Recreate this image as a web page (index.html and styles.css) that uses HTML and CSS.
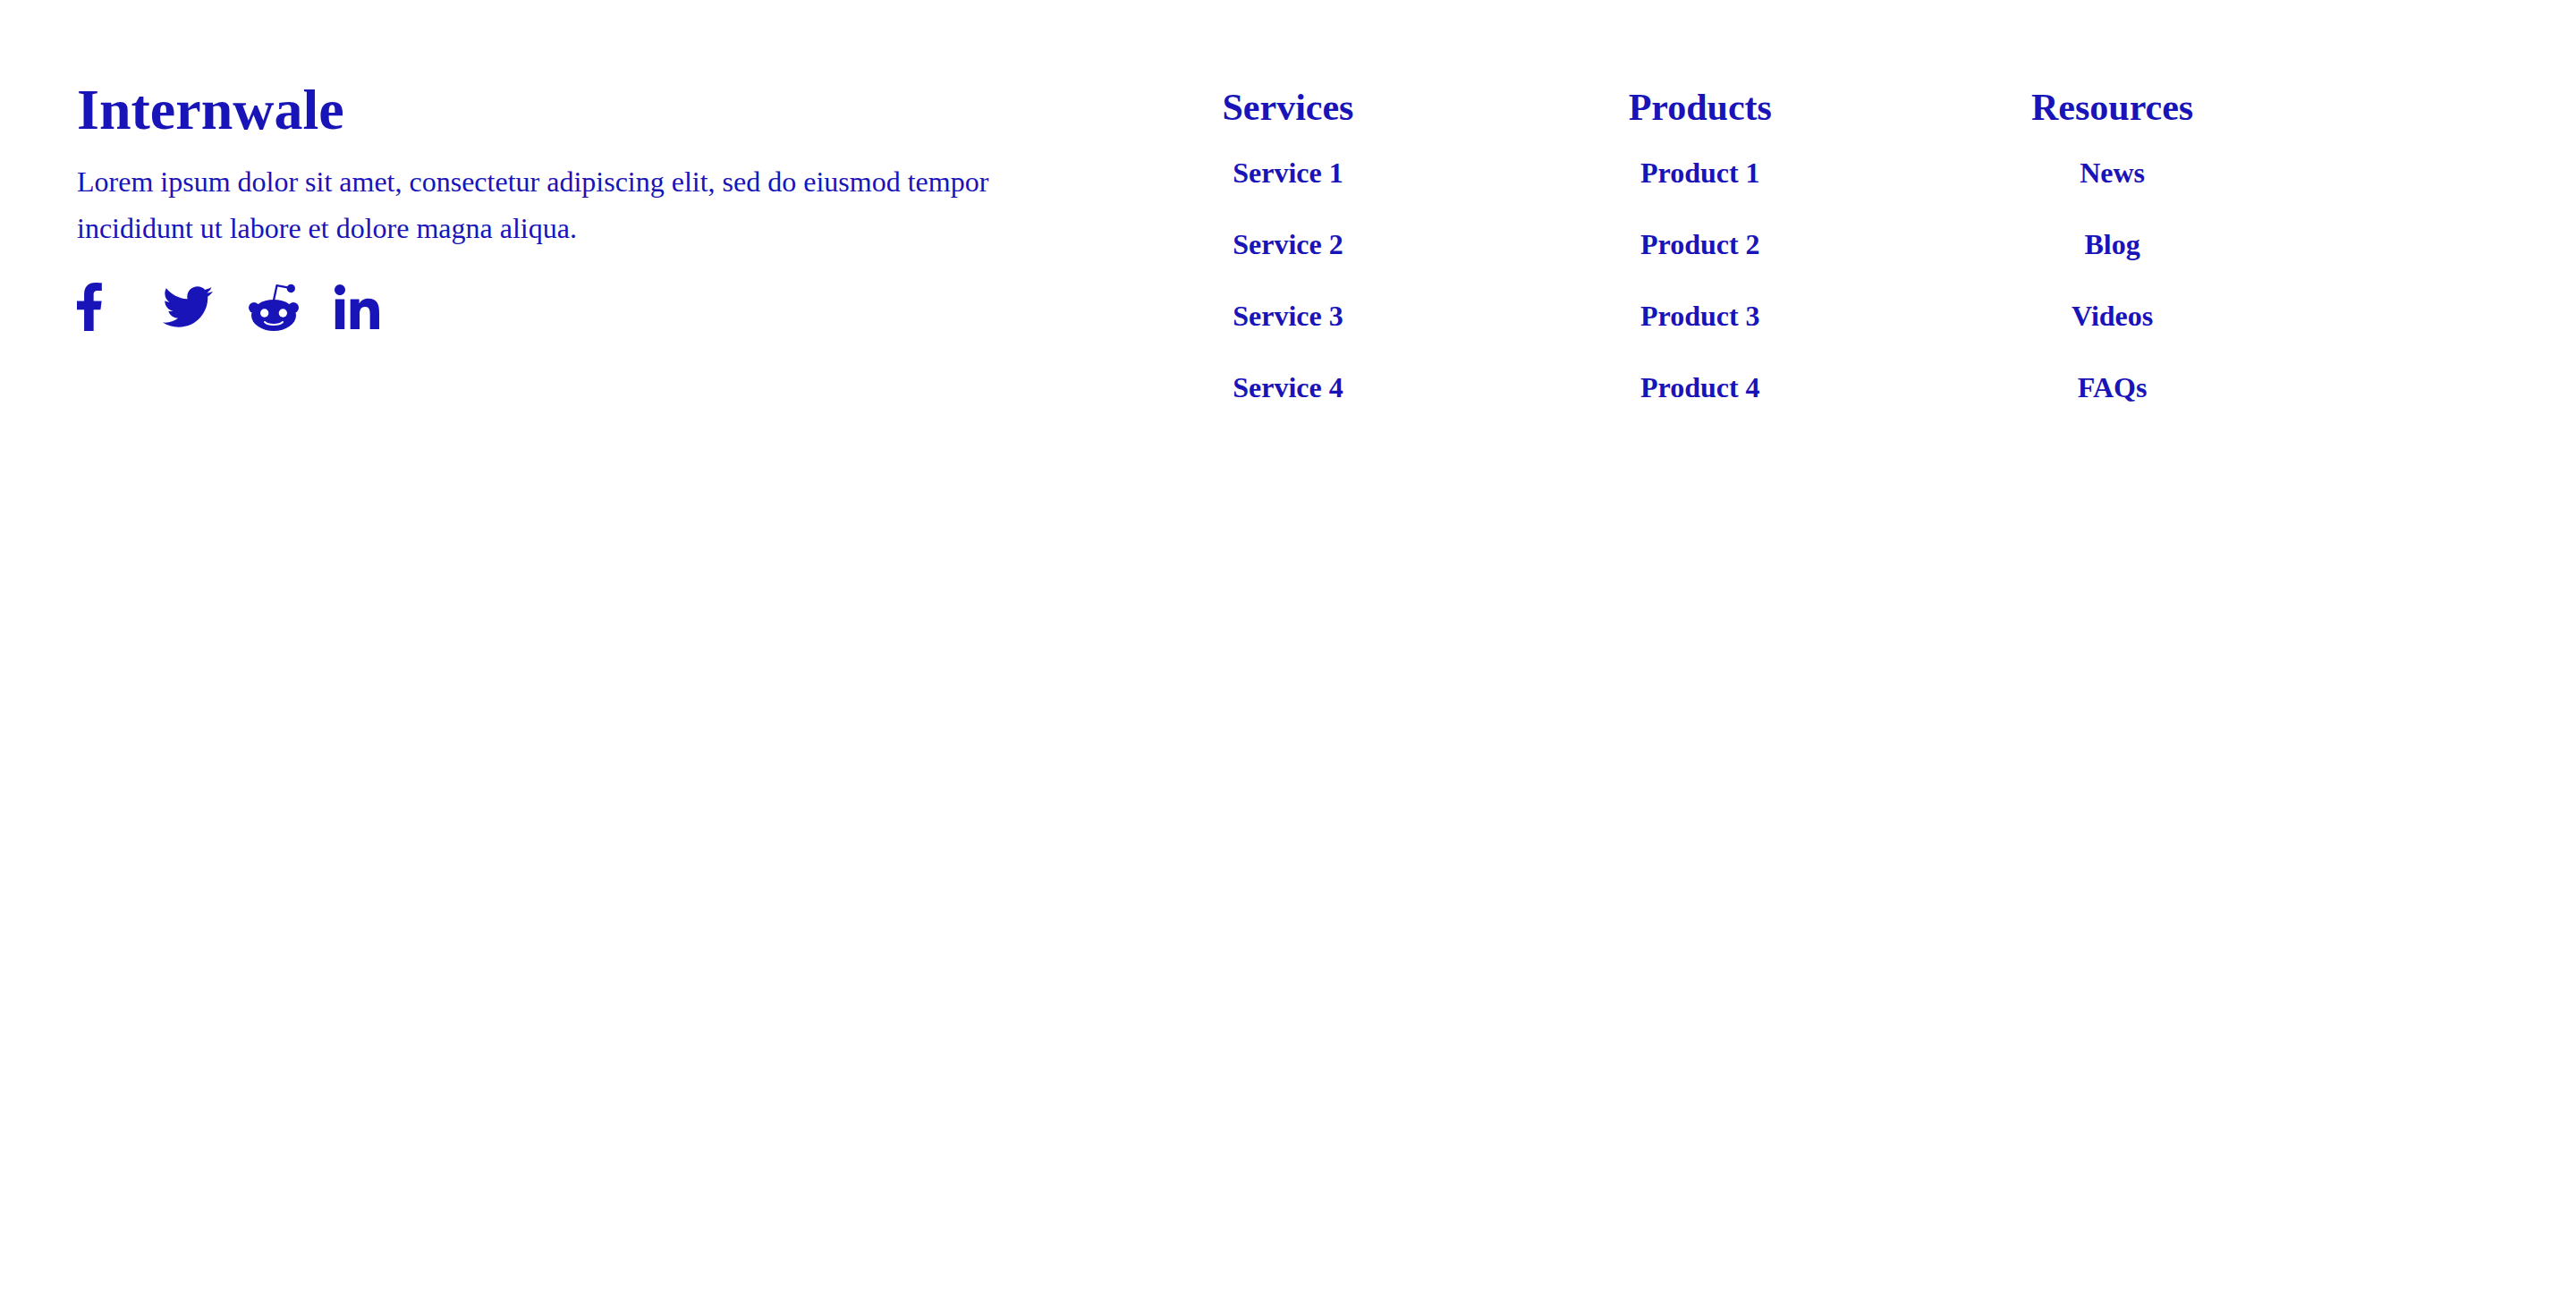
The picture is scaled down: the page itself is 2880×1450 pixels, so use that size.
FILE: index.html
```html
<!DOCTYPE html>
<html lang="en">
<head>
<meta charset="utf-8">
<meta name="viewport" content="width=device-width, initial-scale=1">
<title>Internwale</title>
<link rel="stylesheet" href="styles.css">
</head>
<body>
<footer class="footer">
  <section class="about">
    <h1 class="brand">Internwale</h1>
    <p class="blurb">Lorem ipsum dolor sit amet, consectetur adipiscing elit, sed do eiusmod tempor incididunt ut labore et dolore magna aliqua.</p>
    <nav class="social" aria-label="Social media">
      <a href="#" aria-label="Facebook"><svg viewBox="0 -9 531 531"><path d="M76.700 512V287H0v-91h76.700v-75.700C76.700 42.400 124.300 0 193.800 0c33.300 0 61.900 2.500 70.200 3.600V85h-42c-37.800 0-45.100 18-45.100 44.300V196H262l-11.700 91h-73.400v225z"/></svg></a>
      <a href="#" aria-label="Twitter"><svg viewBox="0 0 512 512"><path d="M459.370 151.716c.325 4.548.325 9.097.325 13.645 0 138.720-105.583 298.558-298.558 298.558-59.452 0-114.680-17.219-161.137-47.106 8.447.974 16.568 1.299 25.340 1.299 49.055 0 94.213-16.568 130.274-44.832-46.132-.975-84.792-31.188-98.112-72.772 6.498.974 12.995 1.624 19.818 1.624 9.421 0 18.843-1.300 27.614-3.573-48.081-9.747-84.143-51.980-84.143-102.985v-1.299c13.969 7.797 30.214 12.670 47.431 13.319-28.264-18.843-46.781-51.005-46.781-87.391 0-19.492 5.197-37.360 14.294-52.954 51.655 63.675 129.300 105.258 216.365 109.807-1.624-7.797-2.599-15.918-2.599-24.040 0-57.828 46.782-104.934 104.934-104.934 30.213 0 57.502 12.670 76.670 33.137 23.715-4.548 46.456-13.320 66.599-25.340-7.798 24.366-24.366 44.833-46.132 57.827 21.117-2.273 41.584-8.122 60.426-16.243-14.292 20.791-32.161 39.308-52.628 54.253z"/></svg></a>
      <a href="#" aria-label="Reddit"><svg viewBox="0 0 168 168">
        <circle cx="18" cy="87" r="18"/><circle cx="150" cy="87" r="18"/>
        <ellipse cx="84" cy="112.500" rx="75" ry="52.500"/>
        <circle cx="142" cy="22.500" r="14"/>
        <path class="line" d="M84 62 94.500 12.500 134 20"/>
        <circle class="cut" cx="53" cy="105" r="14"/><circle class="cut" cx="115" cy="105" r="14"/>
        <path class="smile" d="M54 135c12 12 48 12 60 0"/>
      </svg></a>
      <a href="#" aria-label="LinkedIn"><svg viewBox="0 -27 502 502"><path d="M100.280 448H7.400V148.900h92.880zM53.790 108.100C24.090 108.100 0 83.500 0 53.800a53.790 53.790 0 0 1 107.580 0c0 29.700-24.100 54.300-53.790 54.300zM447.900 448h-92.680V302.400c0-34.700-.7-79.200-48.290-79.200-48.290 0-55.690 37.700-55.690 76.700V448h-92.780V148.900h89.080v40.800h1.300c12.400-23.500 42.690-48.300 87.880-48.300 94 0 111.280 61.900 111.280 142.300V448z"/></svg></a>
    </nav>
  </section>
  <section class="links">
    <h2>Services</h2>
    <ul>
      <li><a href="#">Service 1</a></li>
      <li><a href="#">Service 2</a></li>
      <li><a href="#">Service 3</a></li>
      <li><a href="#">Service 4</a></li>
    </ul>
  </section>
  <section class="links">
    <h2>Products</h2>
    <ul>
      <li><a href="#">Product 1</a></li>
      <li><a href="#">Product 2</a></li>
      <li><a href="#">Product 3</a></li>
      <li><a href="#">Product 4</a></li>
    </ul>
  </section>
  <section class="links">
    <h2>Resources</h2>
    <ul>
      <li><a href="#">News</a></li>
      <li><a href="#">Blog</a></li>
      <li><a href="#">Videos</a></li>
      <li><a href="#">FAQs</a></li>
    </ul>
  </section>
</footer>
</body>
</html>
```
FILE: styles.css
```css
* { box-sizing: border-box; }
body {
  margin: 0;
  background: #fff;
  color: #1914b8;
  font-family: "Liberation Serif", "Times New Roman", serif;
}
h1, h2, p, ul { margin: 0; padding: 0; }
a { color: inherit; text-decoration: none; }
.footer {
  display: grid;
  grid-template-columns: 42% 16% 16% 16%;
  padding: 80px 0;
}
.about { padding: 0 32px 0 86px; }
.brand { font-size: 64px; line-height: 85px; }
.blurb { margin-top: 12px; font-size: 32px; line-height: 52px; }
.social { display: flex; gap: 40px; margin-top: 34px; }
.social svg { display: block; width: 56px; height: 56px; fill: currentColor; }
.social .line { fill: none; stroke: currentColor; stroke-width: 7; stroke-linejoin: round; }
.social .cut { fill: #fff; }
.social .smile { fill: none; stroke: #fff; stroke-width: 6; stroke-linecap: round; }
.links { padding-top: 8px; text-align: center; }
.links h2 { font-size: 42px; line-height: 65px; }
.links ul { list-style: none; font-size: 32px; font-weight: bold; line-height: 80px; }
```
